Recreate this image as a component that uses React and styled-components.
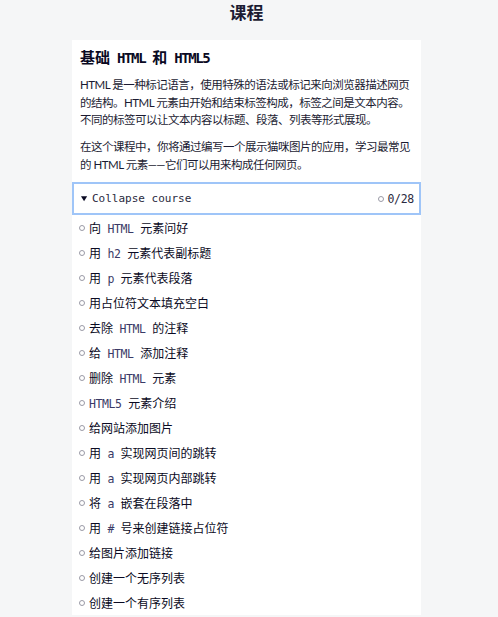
import React from 'react';
import styled, { createGlobalStyle } from 'styled-components';

const lessons = [
    ['向', 'HTML', '元素问好'],
    ['用', 'h2', '元素代表副标题'],
    ['用', 'p', '元素代表段落'],
    ['用占位符文本填充空白'],
    ['去除', 'HTML', '的注释'],
    ['给', 'HTML', '添加注释'],
    ['删除', 'HTML', '元素'],
    ['', 'HTML5', '元素介绍'],
    ['给网站添加图片'],
    ['用', 'a', '实现网页间的跳转'],
    ['用', 'a', '实现网页内部跳转'],
    ['将', 'a', '嵌套在段落中'],
    ['用', '#', '号来创建链接占位符'],
    ['给图片添加链接'],
    ['创建一个无序列表'],
    ['创建一个有序列表'],
];

export default function App() {
    return (
        <Page>
            <GlobalStyle />
            <Title>课程</Title>
            <Card>
                <Heading>
                    基础<Code $size={14} $spacing={-1.4}> HTML </Code>和<Code $size={14} $spacing={-1.4}> HTML5</Code>
                </Heading>
                <Para>
                    HTML 是一种标记语言，使用特殊的语法或标记来向浏览器描述网页的结构。HTML 元素由开始和结束标签构成，标签之间是文本内容。不同的标签可以让文本内容以标题、段落、列表等形式展现。
                </Para>
                <Para>
                    在这个课程中，你将通过编写一个展示猫咪图片的应用，学习最常见的 HTML 元素——它们可以用来构成任何网页。
                </Para>
                <Toggle>
                    <ToggleLabel>
                        <Caret viewBox="0 0 8 8"><path d="M0 1.5h7L3.5 7z" fill="#0a0a23" /></Caret>
                        Collapse course
                    </ToggleLabel>
                    <Count>
                        <Dot />
                        0/28
                    </Count>
                </Toggle>
                <List>
                    {lessons.map(([before, code, after], i) => (
                        <Item key={i}>
                            <Dot />
                            <span>
                                {before}
                                {code && <Code $size={11.5} $spacing={-0.4} $color="#3a3a66">{before ? ' ' : ''}{code} </Code>}
                                {after}
                            </span>
                        </Item>
                    ))}
                </List>
            </Card>
        </Page>
    );
}

const GlobalStyle = createGlobalStyle`
    body {
        margin: 0;
        background-color: #f5f6f7;
        font-family: Lato, "Noto Sans CJK SC", sans-serif;
        color: #0a0a23;
    }
`;

const Page = styled.div`
    width: 498px;
    height: 617px;
    overflow: hidden;
    padding-top: 1px;
    box-sizing: border-box;
`;

const Title = styled.h1`
    margin: 0;
    width: 349px;
    margin-left: 72px;
    text-align: center;
    font-family: "Noto Sans CJK SC", sans-serif;
    font-size: 17px;
    font-weight: 700;
    line-height: 22px;
    color: #1b1b32;
`;

const Card = styled.div`
    width: 349px;
    margin: 17px 0 0 72px;
    padding: 7px 0 0;
    background-color: #fff;
    box-sizing: border-box;
`;

const Heading = styled.h2`
    margin: 0 8px;
    font-family: "Noto Sans CJK SC", sans-serif;
    font-size: 15px;
    font-weight: 700;
    line-height: 20px;
    color: #0a0a23;
`;

const Code = styled.code`
    font-family: "DejaVu Sans Mono", monospace;
    font-size: ${p => p.$size}px;
    letter-spacing: ${p => p.$spacing}px;
    color: ${p => p.$color || 'inherit'};
    white-space: pre;
`;

const Para = styled.p`
    margin: 8px 5px 0 8px;
    font-size: 11.5px;
    letter-spacing: -0.5px;
    line-height: 17.5px;
    color: #1b1b32;
    & + & {
        margin-top: 9.5px;
    }
`;

const Toggle = styled.div`
    margin-top: 9px;
    height: 33px;
    border: 2px solid #9fc5f8;
    box-sizing: border-box;
    display: flex;
    align-items: center;
    justify-content: space-between;
    padding: 0 5px 0 7px;
    font-family: "DejaVu Sans Mono", monospace;
    font-size: 11px;
    color: #2a2a40;
`;

const ToggleLabel = styled.div`
    display: flex;
    align-items: center;
    gap: 4px;
`;

const Caret = styled.svg`
    width: 7px;
    height: 7px;
`;

const Count = styled.div`
    display: flex;
    align-items: center;
    gap: 4px;
    font-size: 11.5px;
    letter-spacing: -0.3px;
`;

const Dot = styled.span`
    width: 6px;
    height: 6px;
    border: 1px solid #9a9aa6;
    border-radius: 50%;
    box-sizing: border-box;
    flex-shrink: 0;
`;

const List = styled.ul`
    list-style: none;
    margin: 0;
    padding: 0 0 0 7px;
`;

const Item = styled.li`
    height: 25px;
    display: flex;
    align-items: center;
    gap: 4px;
    font-family: "Noto Sans CJK SC", sans-serif;
    font-size: 12px;
    color: #0a0a23;
`;
